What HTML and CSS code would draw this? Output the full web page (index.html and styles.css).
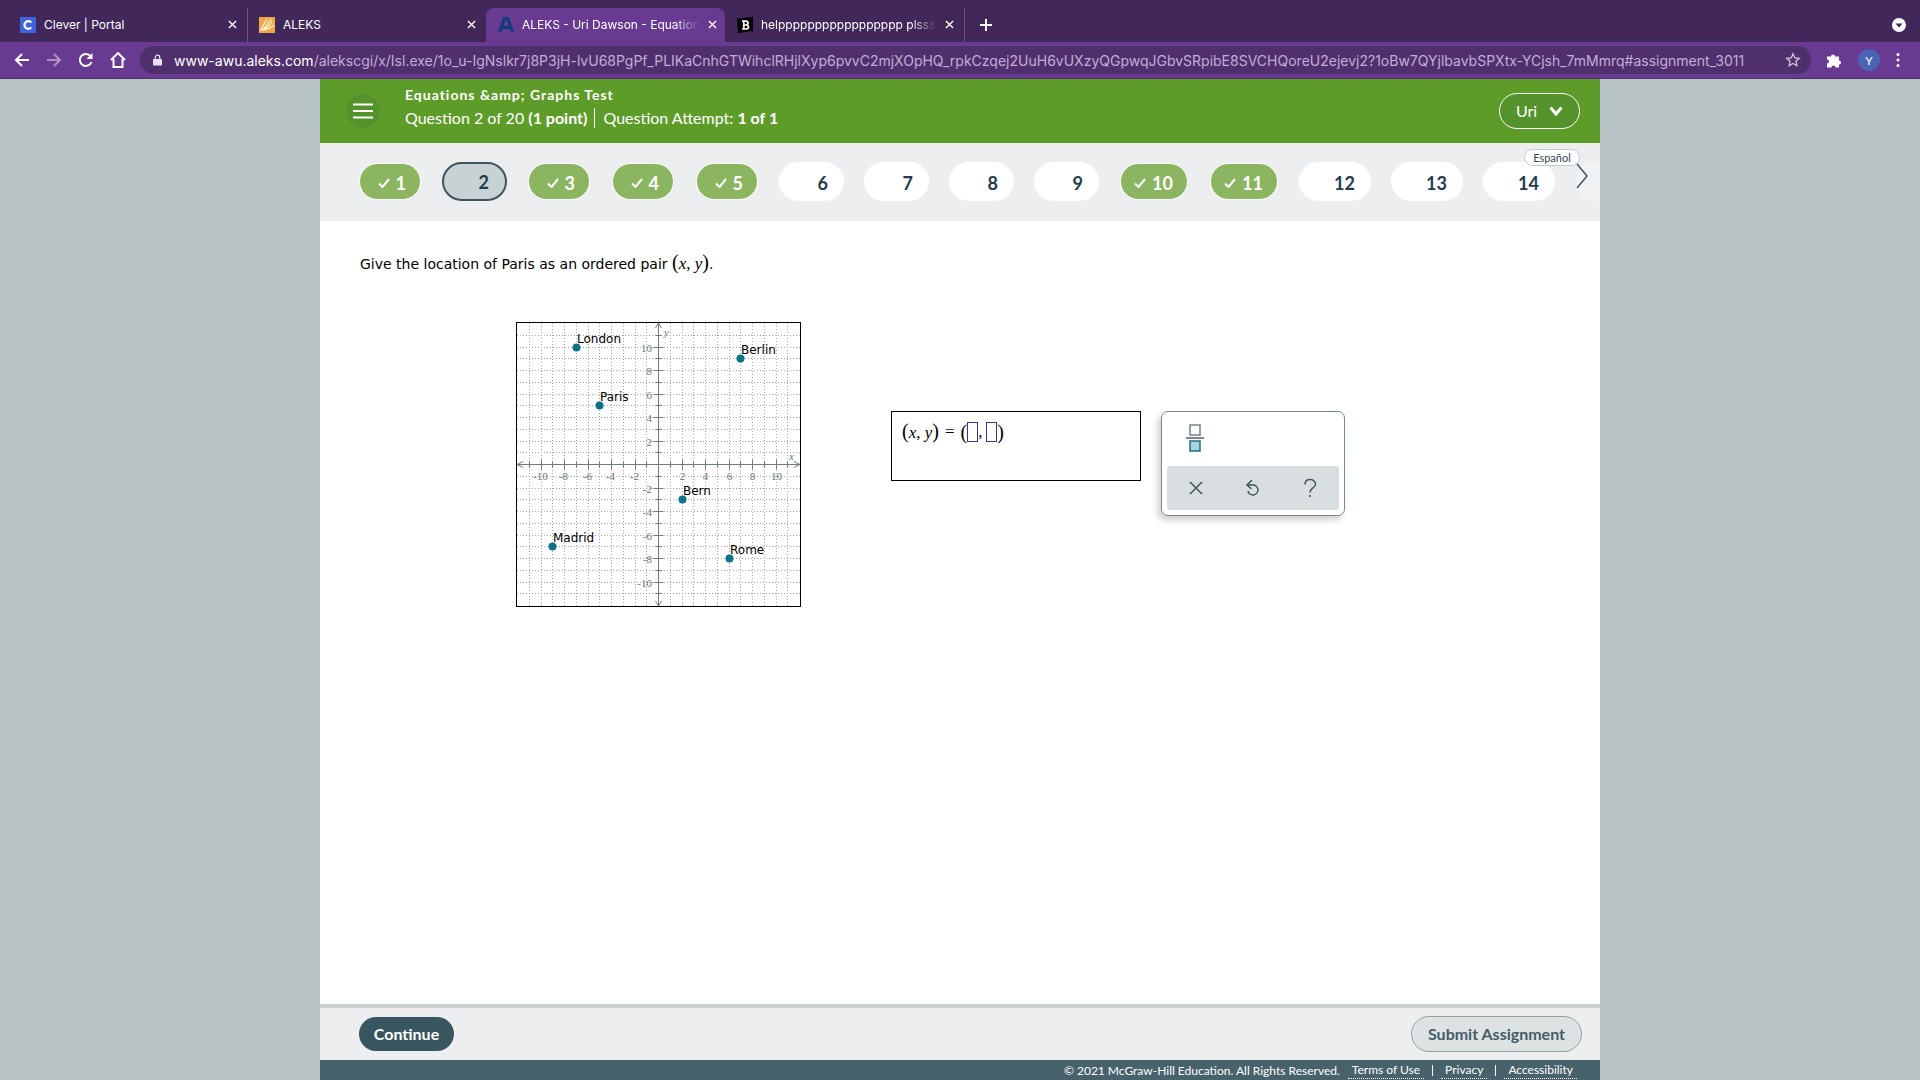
FILE: index.html
```html
<!DOCTYPE html>
<html lang="en">

<head>
    <meta charset="utf-8">
    <title>ALEKS - Uri Dawson - Equation</title>
    <link rel="stylesheet" href="styles.css">
</head>

<body>
    <!-- browser tabs -->
    <div class="tabs">
        <div class="tab">
            <svg class="favicon" viewBox="0 0 16 16"><rect width="16" height="16" rx="1" fill="#3f62dd"/><path d="M11.2 5.6A3.8 3.8 0 1 0 11.2 10.4" fill="none" stroke="#fff" stroke-width="2.2"/></svg>
            <span class="tab-title">Clever | Portal</span>
            <button class="tab-close" aria-label="Close tab"><svg viewBox="0 0 10 10"><path d="M1 1l8 8M9 1l-8 8"/></svg></button>
        </div>
        <div class="tab divided">
            <svg class="favicon" viewBox="0 0 16 16"><rect width="16" height="16" fill="#efa845"/><path d="M1 14L8 2M4 13l8-11M4 13c3-2 7-4 9-9M6 13c3-1 6-2 9-5M3 9l1 4 4-1" fill="none" stroke="#fff3dc" stroke-width="1.2"/></svg>
            <span class="tab-title">ALEKS</span>
            <button class="tab-close" aria-label="Close tab"><svg viewBox="0 0 10 10"><path d="M1 1l8 8M9 1l-8 8"/></svg></button>
        </div>
        <div class="tab active">
            <svg class="favicon" viewBox="0 0 16 16"><path d="M1.5 15L6.6 1h2.8l5.1 14M4 10.5h8" fill="none" stroke="#103c7c" stroke-width="3.2"/></svg>
            <span class="tab-title fade">ALEKS - Uri Dawson - Equation</span>
            <button class="tab-close" aria-label="Close tab"><svg viewBox="0 0 10 10"><path d="M1 1l8 8M9 1l-8 8"/></svg></button>
        </div>
        <div class="tab">
            <svg class="favicon" viewBox="0 0 16 16"><path d="M0 1.5L16 0v14L1 16z" fill="#000"/><path d="M5 4.2h4q2 .2 2 1.9t-2 1.9h-2.4H9q2.5.2 2.5 2T9 12H5M6.8 4v8" fill="none" stroke="#fff" stroke-width="1.7"/></svg>
            <span class="tab-title fade">helppppppppppppppppp plsss</span>
            <button class="tab-close" aria-label="Close tab"><svg viewBox="0 0 10 10"><path d="M1 1l8 8M9 1l-8 8"/></svg></button>
        </div>
        <button class="new-tab" aria-label="New tab"><svg viewBox="0 0 12 12"><path d="M6 0v12M0 6h12"/></svg></button>
        <button class="tab-search" aria-label="Search tabs"><svg viewBox="0 0 14 14"><circle cx="7" cy="7" r="7" fill="#fff"/><path d="M3.5 5.5h7L7 9.5z" fill="#42275b"/></svg></button>
    </div>

    <!-- toolbar -->
    <div class="toolbar">
        <button aria-label="Back"><svg viewBox="0 0 16 16"><path d="M15 8H2M8 2L2 8l6 6"/></svg></button>
        <button class="dim" aria-label="Forward"><svg viewBox="0 0 16 16"><path d="M1 8h13M8 2l6 6-6 6"/></svg></button>
        <button aria-label="Reload"><svg viewBox="0 0 16 16"><path d="M13.5 10A6 6 0 1 1 12.6 4.2"/><path d="M14.5 1v6h-6z" fill="#fff" stroke="none"/></svg></button>
        <button aria-label="Home"><svg viewBox="0 0 16 16"><path d="M1 8l7-7 7 7M3.5 7v8h9V7"/></svg></button>
        <div class="address">
            <svg class="lock" viewBox="0 0 10 12"><rect y="5" width="10" height="7" rx="1" fill="#e9e1f1"/><path d="M2.5 5V3.2a2.5 2.5 0 0 1 5 0V5" fill="none" stroke="#e9e1f1" stroke-width="1.4"/></svg>
            <label class="host" for="url">www-awu.aleks.com</label>
            <input class="url" id="url" type="text" spellcheck="false" value="/alekscgi/x/Isl.exe/1o_u-IgNslkr7j8P3jH-lvU68PgPf_PLIKaCnhGTWihclRHjlXyp6pvvC2mjXOpHQ_rpkCzqej2UuH6vUXzyQGpwqJGbvSRpibE8SVCHQoreU2ejevj2?1oBw7QYjlbavbSPXtx-YCjsh_7mMmrq#assignment_3011">
            <svg class="star" viewBox="0 0 16 16"><path d="M8 1.8l1.8 4.1 4.5.4-3.4 3 1 4.4L8 11.4l-3.9 2.3 1-4.4-3.4-3 4.5-.4z" fill="none" stroke="#d5c6e3" stroke-width="1.3"/></svg>
        </div>
        <button aria-label="Extensions"><svg viewBox="0 0 16 16"><path d="M1 4.5h4a2 2 0 1 1 4 0h4v4a2 2 0 1 1 0 4v3H9.5a2 2 0 1 0-4 0H1V11.5a2 2 0 1 0 0-4z" fill="#fff" stroke="none"/></svg></button>
        <button class="profile">Y</button>
        <button class="dots" aria-label="Menu"><svg viewBox="0 0 4 16"><circle cx="2" cy="2.5" r="1.5"/><circle cx="2" cy="8" r="1.5"/><circle cx="2" cy="13.5" r="1.5"/></svg></button>
    </div>

    <!-- page -->
    <div class="page">
        <header class="header">
            <button class="menu" aria-label="Menu"><svg viewBox="0 0 20 16"><path d="M0 1.5h20M0 8h20M0 14.5h20"/></svg></button>
            <div class="heading">
                <h1>Equations &amp;amp; Graphs Test</h1>
                <p><span>Question 2 of 20 <b>(1 point)</b></span><span class="attempt">Question Attempt: <b>1 of 1</b></span></p>
            </div>
            <button class="user">Uri <svg viewBox="0 0 14 10"><path d="M1.5 1.5L7 8l5.5-6.5"/></svg></button>
        </header>

        <nav class="questions" id="questions">
            <span class="more"></span>
            <button class="language">Español</button>
            <button class="next" aria-label="Next questions"><svg viewBox="0 0 12 26"><path d="M1 1l10 12L1 25"/></svg></button>
        </nav>

        <main class="content">
            <p class="prompt">Give the location of Paris as an ordered pair <span class="math"><span class="paren">(</span><i>x</i>, <i>y</i><span class="paren">)</span></span>.</p>
            <div class="work">
                <svg class="graph" id="graph" viewBox="0 0 283 283"></svg>
                <div class="answer">
                    <span class="math"><span class="paren">(</span><i>x</i>, <i>y</i><span class="paren">)</span></span>
                    <span class="equals">=</span>
                    <span class="math pair"><span class="paren">(</span><input aria-label="x value"><span class="comma">,</span><input aria-label="y value"><span class="paren">)</span></span>
                </div>
                <div class="palette">
                    <button class="fraction" aria-label="Fraction"><svg viewBox="0 0 18 28"><rect x="4" y="1" width="10" height="10" fill="#fff" stroke="#71838a" stroke-width="1.5"/><path d="M0 14h18" stroke="#4a626b" stroke-width="1.5"/><rect x="4" y="17" width="10" height="10" fill="#a9d3da" stroke="#1d7183" stroke-width="1.5"/></svg></button>
                    <div class="tools">
                        <button aria-label="Clear"><svg viewBox="0 0 18 20"><path d="M3 4l12 12M15 4L3 16"/></svg></button>
                        <button aria-label="Undo"><svg viewBox="0 0 18 20"><path d="M3 7h6.5a5 5 0 1 1-5.5 6M8 2L3 7l4.5 4"/></svg></button>
                        <button aria-label="Help"><svg viewBox="0 0 18 20"><path d="M4 6.5C4 3 6 1.5 9 1.5s5.5 2 5.5 4.5c0 4-5.5 4-5.5 8.5M9 17v2"/></svg></button>
                    </div>
                </div>
            </div>
        </main>

        <div class="actions">
            <button class="continue">Continue</button>
            <button class="submit">Submit Assignment</button>
        </div>
        <footer class="footer">
            <span>© 2021 McGraw-Hill Education. All Rights Reserved.</span>
            <a href="#">Terms of Use</a><i></i><a href="#">Privacy</a><i></i><a href="#">Accessibility</a>
        </footer>
    </div>

    <script>
        // question pills
        var done = [1, 3, 4, 5, 10, 11];
        var pills = "";
        for (var n = 1; n <= 14; n++) {
            var cls = "pill" + (n > 9 ? " wide" : "");
            var check = "";
            if (done.indexOf(n) > -1) {
                cls += " done";
                check = '<svg viewBox="0 0 12 10"><path d="M1 5.5L4.5 9 11 1"/></svg>';
            }
            if (n == 2) cls += " current";
            pills += '<button class="' + cls + '">' + check + n + '</button>';
        }
        document.getElementById("questions").insertAdjacentHTML("afterbegin", pills);

        // coordinate grid, -12 to 12 on both axes
        var unit = 11.75, mid = 142, out = "", i, p;
        for (i = -11; i <= 11; i++) {
            p = Math.round(mid + i * unit) - .5;
            out += '<path class="grid" d="M' + p + ' 0V283M0 ' + p + 'H283"/>';
        }
        out += '<path class="axis" d="M141.5 0V283M0 141.5H283M138.5 5l3-5 3 5M138.5 278l3 5 3-5M6 138.5l-6 3 6 3M277 138.5l6 3-6 3"/>';
        for (i = -11; i <= 11; i++) {
            if (i == 0) continue;
            p = Math.round(mid + i * unit) - .5;
            var t = i % 2 ? 3 : 5;
            out += '<path class="axis" d="M' + p + ' ' + (141.5 - t) + 'v' + (2 * t) + 'M' + (141.5 - t) + ' ' + p + 'h' + (2 * t) + '"/>';
            if (i % 2 == 0) {
                out += '<text class="num" text-anchor="middle" x="' + (i < 0 ? p - 1 : p) + '" y="157">' + i + '</text>';
                out += '<text class="num" text-anchor="end" x="135" y="' + (p + 4) + '">' + -i + '</text>';
            }
        }
        out += '<text class="var" x="147" y="13">y</text><text class="var" x="272" y="137">x</text>';

        var cities = [["London", -7, 10], ["Berlin", 7, 9], ["Paris", -5, 5], ["Bern", 2, -3], ["Madrid", -9, -7], ["Rome", 6, -8]];
        cities.forEach(function (c) {
            var x = Math.round(mid + c[1] * unit) - .5, y = Math.round(mid - c[2] * unit) - .5;
            out += '<circle cx="' + x + '" cy="' + y + '" r="4"/><text class="city" x="' + (x + .5) + '" y="' + (y - 4.5) + '">' + c[0] + '</text>';
        });
        document.getElementById("graph").innerHTML = out;
    </script>
</body>

</html>
```
FILE: styles.css
```css
* {
    box-sizing: border-box;
}

body {
    margin: 0;
    min-height: 100vh;
    display: flex;
    flex-direction: column;
    background: #b7c3c5;
    font-family: Lato, "Liberation Sans", sans-serif;
}

button {
    padding: 0;
    border: 0;
    background: none;
    color: inherit;
    font: inherit;
    cursor: pointer;
}

svg {
    display: block;
}

/* browser tabs */
.tabs {
    display: flex;
    height: 42px;
    padding: 8px 14px 0 8px;
    background: #42275b;
    color: #fff;
    font: 12px Inter, sans-serif;
}

.tab {
    display: flex;
    align-items: center;
    gap: 8px;
    width: 239px;
    padding: 0 9px 1px 12px;
}

.tab.divided {
    box-shadow: inset 1px 0 #6b5480;
}

.tab.active {
    border-radius: 8px 8px 0 0;
    background: #683a92;
}

.favicon {
    width: 16px;
    height: 16px;
    flex: none;
}

.tab-title {
    flex: 1;
    white-space: nowrap;
}

.tab-title.fade {
    -webkit-mask-image: linear-gradient(to right, #000 85%, transparent);
    mask-image: linear-gradient(to right, #000 85%, transparent);
}

.tab-close svg {
    width: 9px;
    height: 9px;
    fill: none;
    stroke: #fff;
    stroke-width: 1.5;
}

.tab-close {
    width: 10px;
    flex: none;
}

.new-tab {
    padding: 0 16px;
    box-shadow: inset 1px 0 #6b5480;
}

.new-tab svg {
    width: 12px;
    height: 12px;
    stroke: #fff;
    stroke-width: 2;
}

.tab-search {
    margin-left: auto;
}

.tab-search svg {
    width: 14px;
    height: 14px;
}

/* toolbar */
.toolbar {
    display: flex;
    align-items: center;
    gap: 16px;
    height: 37px;
    padding: 0 20px 0 14px;
    border-bottom: 1px solid #4e3069;
    background: #683a92;
}

.toolbar button svg {
    width: 16px;
    height: 16px;
    fill: none;
    stroke: #fff;
    stroke-width: 2;
}

.toolbar .dim {
    opacity: .45;
}

.address {
    flex: 1;
    display: flex;
    align-items: center;
    height: 28px;
    margin: 0 -1px 0 -2px;
    padding: 0 10px 0 13px;
    border-radius: 14px;
    background: #50306c;
    font: 14px Inter, sans-serif;
}

.lock {
    width: 9px;
    height: 12px;
    margin-right: 12px;
}

.host {
    color: #fff;
}

.url {
    flex: 1;
    min-width: 0;
    padding: 0;
    border: 0;
    outline: 0;
    background: none;
    color: #c3acd8;
    font: inherit;
}

.star {
    width: 16px;
    height: 16px;
}

.toolbar .profile {
    width: 22px;
    height: 22px;
    border-radius: 50%;
    background: #4a63b5;
    color: #fff;
    font-size: 12px;
}

.toolbar .dots svg {
    width: 4px;
    fill: #fff;
    stroke: none;
}

/* page */
.page {
    flex: 1;
    display: flex;
    flex-direction: column;
    width: 100%;
    max-width: 1280px;
    margin: 0 auto;
    background: #fff;
}

.header {
    display: flex;
    align-items: center;
    height: 64px;
    padding: 0 20px 0 26px;
    background: #5e9c2a;
    color: #fff;
}

.menu {
    display: flex;
    align-items: center;
    justify-content: center;
    width: 34px;
    height: 34px;
    border-radius: 50%;
    background: #54932c;
}

.menu svg {
    width: 20px;
    height: 16px;
    stroke: #fff;
    stroke-width: 2;
}

.heading {
    flex: 1;
    margin-left: 25px;
    padding-bottom: 8px;
}

.heading h1 {
    margin: 0 0 4px;
    font-size: 14px;
    font-weight: 700;
    line-height: 18px;
    letter-spacing: 1px;
}

.heading p {
    display: flex;
    margin: 0;
    font-size: 16px;
    line-height: 20px;
}

.attempt {
    margin-left: 7px;
    padding-left: 8px;
    border-left: 1px solid #fff;
}

.user {
    display: flex;
    align-items: center;
    justify-content: center;
    gap: 12px;
    width: 81px;
    height: 36px;
    border: 1px solid #fff;
    border-radius: 18px;
    background: #54932c;
    font-size: 16px;
    line-height: 18px;
}

.user svg {
    width: 14px;
    height: 10px;
    fill: none;
    stroke: #fff;
    stroke-width: 3;
}

/* question navigation */
.questions {
    position: relative;
    display: flex;
    align-items: center;
    gap: 20px;
    height: 78px;
    padding: 0 0 1px 38px;
    background: #edeef0;
}

.pill {
    display: flex;
    align-items: center;
    justify-content: flex-end;
    flex: none;
    width: 65px;
    height: 39px;
    padding: 2px 16px 0 0;
    border-radius: 20px;
    background: #fff;
    color: #223c4c;
    font-size: 18px;
    font-weight: 700;
}

.pill.wide {
    width: 72px;
}

.pill.current {
    border: 2px solid #3f5661;
    background: #c8d1d3;
    padding-top: 0;
}

.pill.done {
    gap: 6px;
    width: 62px;
    height: 37px;
    margin: 0 1px;
    padding-right: 14px;
    border: 1px solid #fff;
    background: #8cb561;
    color: #fff;
}

.pill.done.wide {
    width: 68px;
}

.pill svg {
    width: 12px;
    height: 10px;
    fill: none;
    stroke: #fff;
    stroke-width: 2;
}

/* left end of the next pill, faded out below the arrow */
.more {
    flex: 1;
    height: 39px;
    border-radius: 20px 0 0 20px;
    background: #f1f2f3;
}

.language {
    position: absolute;
    top: 6px;
    right: 20px;
    width: 56px;
    height: 17px;
    border: 1px solid #c5cccd;
    border-radius: 9px;
    background: #fff;
    color: #33474f;
    font-size: 11px;
    line-height: 15px;
}

.next {
    position: absolute;
    top: 20px;
    right: 12px;
}

.next svg {
    width: 12px;
    height: 26px;
    fill: none;
    stroke: #3f5661;
    stroke-width: 1.5;
}

/* question */
.content {
    flex: 1;
    padding: 28px 40px;
}

.prompt {
    margin: 0;
    font: 14px/30px "DejaVu Sans", sans-serif;
}

.math {
    font: 17px/20px "Liberation Serif", serif;
}

.paren {
    font-size: 20px;
}

.work {
    display: flex;
    align-items: flex-start;
    margin: 43px 0 0 156px;
}

.graph {
    width: 285px;
    height: 285px;
    border: 1px solid #000;
}

.grid {
    stroke: #a5a5a5;
    stroke-dasharray: 1 2;
}

.axis {
    fill: none;
    stroke: #6d7c84;
}

.num,
.var {
    fill: #66757c;
    font: 11px "Liberation Serif", serif;
}

.var {
    font-style: italic;
}

.graph circle {
    fill: #0b7489;
}

.city {
    font: 12px "DejaVu Sans", sans-serif;
}

.answer {
    display: flex;
    align-items: center;
    gap: 6px;
    width: 250px;
    height: 70px;
    margin: 89px 0 0 90px;
    padding: 0 10px 28px;
    border: 1px solid #000;
}

.equals {
    font: 17px/20px "Liberation Serif", serif;
}

.pair {
    display: flex;
    align-items: center;
}

.pair input {
    width: 11px;
    height: 20px;
    padding: 0;
    border: 1px solid #3136a5;
}

.comma {
    width: 8px;
}

.palette {
    width: 184px;
    height: 105px;
    margin: 89px 0 0 20px;
    padding: 12px 5px 5px;
    border: 1px solid #768a91;
    border-radius: 7px;
    box-shadow: -3px 4px 6px rgba(0, 0, 0, .2);
}

.fraction {
    display: block;
    margin: 0 0 14px 19px;
}

.fraction svg {
    width: 18px;
    height: 28px;
}

.tools {
    display: flex;
    height: 44px;
    border-radius: 3px;
    background: #d9dfe1;
}

.tools button {
    flex: 1;
}

.tools svg {
    width: 18px;
    height: 20px;
    margin: 0 auto;
    fill: none;
    stroke: #3f5661;
    stroke-width: 1.5;
}

/* bottom bars */
.actions {
    display: flex;
    align-items: center;
    justify-content: space-between;
    height: 56px;
    padding: 0 18px 0 39px;
    border-top: 4px solid #c9d1d0;
    background: #edeef0;
    font-size: 16px;
    font-weight: 700;
}

.actions button {
    padding-bottom: 2px;
}

.continue {
    width: 95px;
    height: 34px;
    border-radius: 17px;
    background: #38565f;
    color: #fff;
}

.submit {
    width: 171px;
    height: 36px;
    border: 1px solid #90a0a4;
    border-radius: 18px;
    background: #dde3e3;
    color: #435c68;
}

.footer {
    display: flex;
    justify-content: flex-end;
    align-items: center;
    height: 20px;
    padding-right: 23px;
    background: #48626b;
    color: #fff;
    font-size: 12px;
}

.footer span {
    margin-right: 8px;
}

.footer a {
    padding: 0 4px;
    border-bottom: 1px dotted #fff;
    color: #fff;
    line-height: 16px;
    text-decoration: none;
}

.footer i {
    width: 1px;
    height: 11px;
    margin: 0 8px;
    background: #fff;
}
```
